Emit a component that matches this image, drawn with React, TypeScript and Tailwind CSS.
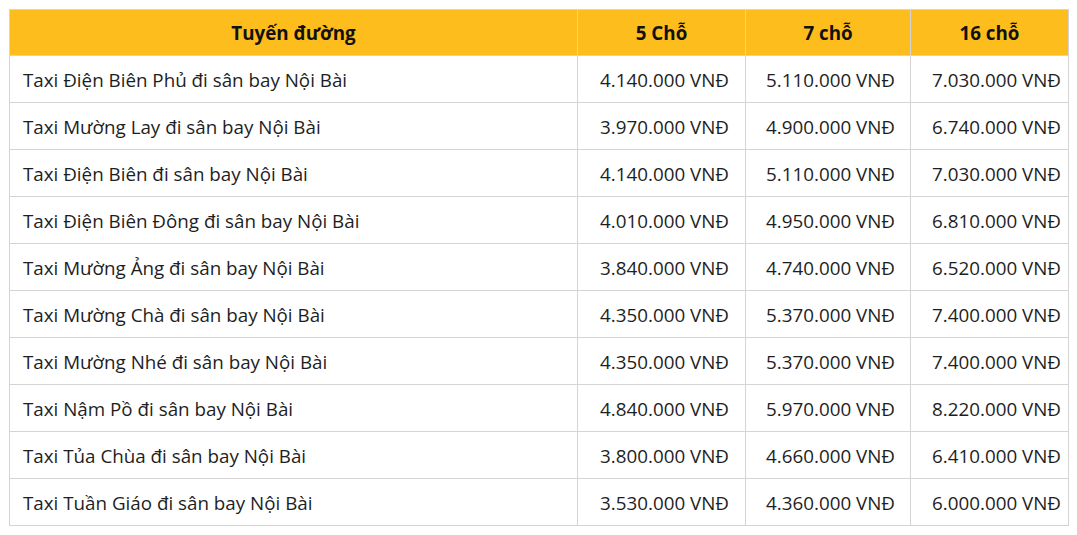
const rows: [string, string, string, string][] = [
  ["Taxi Điện Biên Phủ đi sân bay Nội Bài", "4.140.000 VNĐ", "5.110.000 VNĐ", "7.030.000 VNĐ"],
  ["Taxi Mường Lay đi sân bay Nội Bài", "3.970.000 VNĐ", "4.900.000 VNĐ", "6.740.000 VNĐ"],
  ["Taxi Điện Biên đi sân bay Nội Bài", "4.140.000 VNĐ", "5.110.000 VNĐ", "7.030.000 VNĐ"],
  ["Taxi Điện Biên Đông đi sân bay Nội Bài", "4.010.000 VNĐ", "4.950.000 VNĐ", "6.810.000 VNĐ"],
  ["Taxi Mường Ảng đi sân bay Nội Bài", "3.840.000 VNĐ", "4.740.000 VNĐ", "6.520.000 VNĐ"],
  ["Taxi Mường Chà đi sân bay Nội Bài", "4.350.000 VNĐ", "5.370.000 VNĐ", "7.400.000 VNĐ"],
  ["Taxi Mường Nhé đi sân bay Nội Bài", "4.350.000 VNĐ", "5.370.000 VNĐ", "7.400.000 VNĐ"],
  ["Taxi Nậm Pồ đi sân bay Nội Bài", "4.840.000 VNĐ", "5.970.000 VNĐ", "8.220.000 VNĐ"],
  ["Taxi Tủa Chùa đi sân bay Nội Bài", "3.800.000 VNĐ", "4.660.000 VNĐ", "6.410.000 VNĐ"],
  ["Taxi Tuần Giáo đi sân bay Nội Bài", "3.530.000 VNĐ", "4.360.000 VNĐ", "6.000.000 VNĐ"],
];

export default function App() {
  return (
    <div className="min-h-screen bg-white p-[9px] font-['Open_Sans',sans-serif] text-[18.8px] text-[#1e1e1e]">
      <table className="w-[1059px] table-fixed border-collapse">
        <colgroup>
          <col className="w-[568px]" />
          <col className="w-[168px]" />
          <col className="w-[165px]" />
          <col className="w-[158px]" />
        </colgroup>
        <thead>
          <tr className="h-[46px] bg-[#fdbd1d] font-bold text-[#111]">
            <th className="border border-[#d4d4d4] pt-[2px] text-center">Tuyến đường</th>
            <th className="border border-[#d4d4d4] pt-[2px] text-center">5 Chỗ</th>
            <th className="border border-[#d4d4d4] pt-[2px] text-center">7 chỗ</th>
            <th className="border border-[#d4d4d4] pt-[2px] text-center">16 chỗ</th>
          </tr>
        </thead>
        <tbody>
          {rows.map((r, i) => (
            <tr key={i} className="h-[47px]">
              <td className="border border-[#d4d4d4] pl-[13px] pt-[2px]">{r[0]}</td>
              <td className="border border-[#d4d4d4] pr-[16px] pt-[2px] text-right">{r[1]}</td>
              <td className="border border-[#d4d4d4] pr-[15px] pt-[2px] text-right">{r[2]}</td>
              <td className="border border-[#d4d4d4] pr-[7px] pt-[2px] text-right">{r[3]}</td>
            </tr>
          ))}
        </tbody>
      </table>
    </div>
  );
}
